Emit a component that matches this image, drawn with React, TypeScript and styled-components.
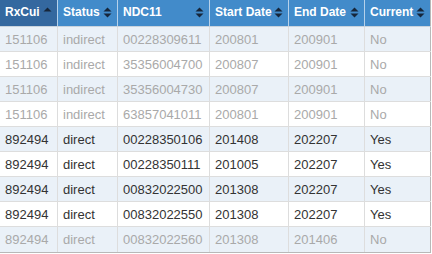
import React from 'react';
import styled, { createGlobalStyle } from 'styled-components';

const GlobalStyle = createGlobalStyle`
	html, body {
		margin: 0;
		padding: 0;
		background: #ffffff;
	}
	body {
		font-family: 'Liberation Sans', Arial, sans-serif;
	}
`;

type Row = {
	rxcui: string;
	status: string;
	ndc: string;
	start: string;
	end: string;
	current: string;
};

const rows: Row[] = [
	{ rxcui: '151106', status: 'indirect', ndc: '00228309611', start: '200801', end: '200901', current: 'No' },
	{ rxcui: '151106', status: 'indirect', ndc: '35356004700', start: '200807', end: '200901', current: 'No' },
	{ rxcui: '151106', status: 'indirect', ndc: '35356004730', start: '200807', end: '200901', current: 'No' },
	{ rxcui: '151106', status: 'indirect', ndc: '63857041011', start: '200801', end: '200901', current: 'No' },
	{ rxcui: '892494', status: 'direct', ndc: '00228350106', start: '201408', end: '202207', current: 'Yes' },
	{ rxcui: '892494', status: 'direct', ndc: '00228350111', start: '201005', end: '202207', current: 'Yes' },
	{ rxcui: '892494', status: 'direct', ndc: '00832022500', start: '201308', end: '202207', current: 'Yes' },
	{ rxcui: '892494', status: 'direct', ndc: '00832022550', start: '201308', end: '202207', current: 'Yes' },
	{ rxcui: '892494', status: 'direct', ndc: '00832022560', start: '201308', end: '201406', current: 'No' },
];

const columns = [
	{ key: 'rxcui', label: 'RxCui', sort: 'asc' },
	{ key: 'status', label: 'Status', sort: 'both' },
	{ key: 'ndc', label: 'NDC11', sort: 'both' },
	{ key: 'start', label: 'Start Date', sort: 'both' },
	{ key: 'end', label: 'End Date', sort: 'both' },
	{ key: 'current', label: 'Current', sort: 'both' },
] as const;

const GRID = '58px 60px 92px 79px 76px 66px';

const Table = styled.div`
	width: 431px;
	border-bottom: 1px solid #b8b8b8;
`;

const HeadRow = styled.div`
	display: grid;
	grid-template-columns: ${GRID};
	height: 27px;
	border-bottom: 1px solid #c9d3dd;
	box-sizing: border-box;
`;

const HeadCell = styled.div<{ $sorted?: boolean }>`
	display: flex;
	align-items: center;
	justify-content: space-between;
	padding: 0 5px 2px 5px;
	background: ${(p) => (p.$sorted ? '#34689f' : '#428bca')};
	border-right: 1px solid #b6d1ea;
	color: #ffffff;
	font-size: 12px;
	font-weight: bold;
	white-space: nowrap;
	box-sizing: border-box;

	&:last-child {
		border-right-color: #b8b8b8;
	}
`;

const BodyRow = styled.div<{ $odd: boolean; $inactive: boolean }>`
	display: grid;
	grid-template-columns: ${GRID};
	height: 25px;
	background: ${(p) => (p.$odd ? '#eaf1f8' : '#ffffff')};
	color: ${(p) => (p.$inactive ? '#a9a9a9' : '#333333')};
	border-bottom: 1px solid #dddddd;
	box-sizing: border-box;

	&:last-child {
		border-bottom: none;
	}
`;

const Cell = styled.div`
	display: flex;
	align-items: center;
	padding: 0 5px;
	font-size: 13px;
	border-right: 1px solid #dddddd;
	white-space: nowrap;
	box-sizing: border-box;

	&:last-child {
		border-right-color: #b8b8b8;
	}
`;

const SortIcon = ({ mode }: { mode: 'asc' | 'both' }) => (
	<svg width="9" height="11" viewBox="0 0 9 11" style={{ flexShrink: 0 }}>
		<polygon points="0.5,4.5 4.5,0.5 8.5,4.5" fill="#16263a" />
		{mode === 'both' && <polygon points="0.5,6.5 8.5,6.5 4.5,10.5" fill="#16263a" />}
	</svg>
);

export default function App() {
	return (
		<>
			<GlobalStyle />
			<Table>
				<HeadRow>
					{columns.map((c) => (
						<HeadCell key={c.key} $sorted={c.sort === 'asc'}>
							<span>{c.label}</span>
							<SortIcon mode={c.sort} />
						</HeadCell>
					))}
				</HeadRow>
				{rows.map((r, i) => (
					<BodyRow key={r.ndc} $odd={i % 2 === 0} $inactive={r.current === 'No'}>
						<Cell>{r.rxcui}</Cell>
						<Cell>{r.status}</Cell>
						<Cell>{r.ndc}</Cell>
						<Cell>{r.start}</Cell>
						<Cell>{r.end}</Cell>
						<Cell>{r.current}</Cell>
					</BodyRow>
				))}
			</Table>
		</>
	);
}
